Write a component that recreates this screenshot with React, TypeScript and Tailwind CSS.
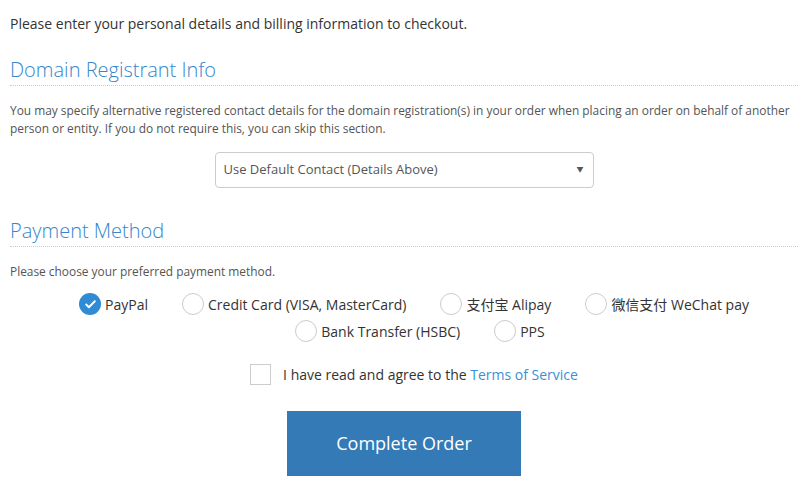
import { Check } from 'lucide-react';

const font = { fontFamily: '"Open Sans", "Noto Sans CJK SC", sans-serif' };

function Radio({ label, checked }: { label: string; checked?: boolean }) {
  return (
    <label className="flex items-center gap-[4px] text-[14px] text-[#333]">
      {checked ? (
        <span className="flex h-[22px] w-[22px] items-center justify-center rounded-full bg-[#2f8bd3]">
          <Check className="h-[13px] w-[13px] text-white" strokeWidth={3.5} />
        </span>
      ) : (
        <span className="h-[22px] w-[22px] rounded-full border border-[#ccc] bg-white" />
      )}
      <span>{label}</span>
    </label>
  );
}

function SectionTitle({ children }: { children: string }) {
  return (
    <div className="border-b border-dotted border-[#ccc] pb-[1px]">
      <h2 className="text-[20px] font-light leading-[28px] text-[#3586cc]">{children}</h2>
    </div>
  );
}

export default function App() {
  return (
    <div style={font} className="min-h-[491px] w-[811px] bg-white pl-[10px] pr-[13px] pt-[14px]">
      <p className="text-[14px] leading-[20px] text-[#333]">
        Please enter your personal details and billing information to checkout.
      </p>

      <div className="mt-[22px]">
        <SectionTitle>Domain Registrant Info</SectionTitle>
        <p className="mt-[15px] text-[11.9px] leading-[18px] text-[#555]">
          You may specify alternative registered contact details for the domain registration(s) in your order when placing an order on behalf of another person or entity. If you do not require this, you can skip this section.
        </p>
        <div className="mt-[15px] flex justify-center">
          <div className="flex h-[36px] w-[379px] items-center justify-between rounded-[4px] border border-[#ccc] pl-[8px] pr-[9px] text-[13px] text-[#555]">
            <span>Use Default Contact (Details Above)</span>
            <span className="text-[7px] text-[#555]">▼</span>
          </div>
        </div>
      </div>

      <div className="mt-[29px]">
        <SectionTitle>Payment Method</SectionTitle>
        <p className="mt-[15px] text-[11.9px] leading-[18px] text-[#555]">
          Please choose your preferred payment method.
        </p>
        <div className="mt-[13px] flex flex-col items-center gap-[5px] pl-[20px]">
          <div className="flex items-center gap-[34px]">
            <Radio label="PayPal" checked />
            <Radio label="Credit Card (VISA, MasterCard)" />
            <Radio label="支付宝 Alipay" />
            <Radio label="微信支付 WeChat pay" />
          </div>
          <div className="flex items-center gap-[34px] pl-[12px]">
            <Radio label="Bank Transfer (HSBC)" />
            <Radio label="PPS" />
          </div>
        </div>
        <div className="mt-[22px] flex items-center justify-center gap-[12px] pl-[20px]">
          <span className="h-[21px] w-[21px] border border-[#ccc] bg-white" />
          <span className="text-[14px] text-[#333]">
            I have read and agree to the <a className="text-[#3a8fd6]">Terms of Service</a>
          </span>
        </div>
        <div className="mt-[26px] flex justify-center">
          <button className="h-[65px] w-[234px] bg-[#337ab7] text-[18px] text-white">Complete Order</button>
        </div>
      </div>
    </div>
  );
}
